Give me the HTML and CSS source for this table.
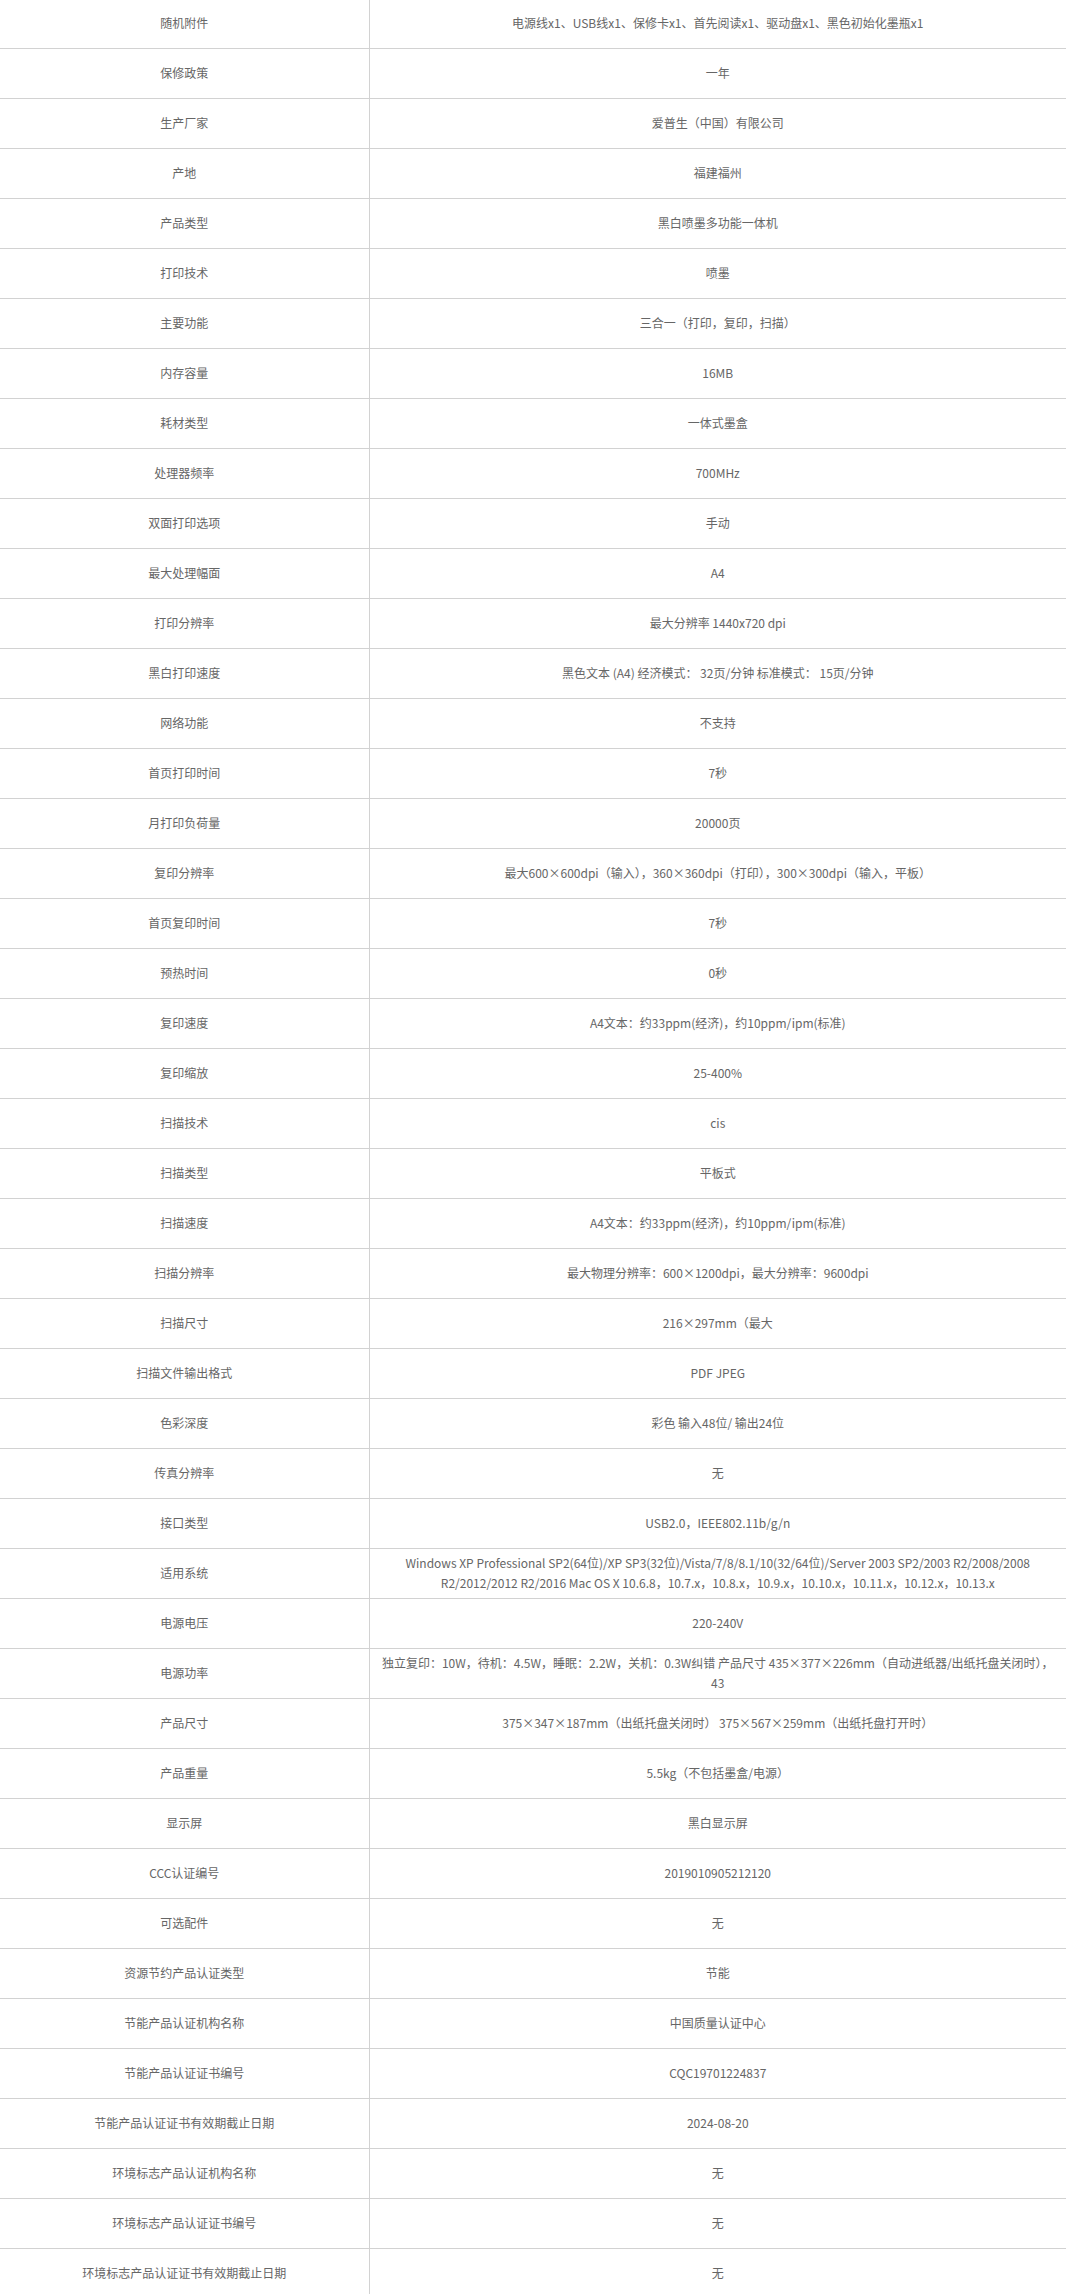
FILE: index.html
```html
<!DOCTYPE html>
<html lang="zh-CN">
<head>
<meta charset="utf-8">
<title>产品参数</title>
<link rel="stylesheet" href="styles.css">
</head>
<body>
<table class="spec">
<tbody>
<tr><td class="k">随机附件</td><td class="v">电源线x1、USB线x1、保修卡x1、首先阅读x1、驱动盘x1、黑色初始化墨瓶x1</td></tr>
<tr><td class="k">保修政策</td><td class="v">一年</td></tr>
<tr><td class="k">生产厂家</td><td class="v">爱普生（中国）有限公司</td></tr>
<tr><td class="k">产地</td><td class="v">福建福州</td></tr>
<tr><td class="k">产品类型</td><td class="v">黑白喷墨多功能一体机</td></tr>
<tr><td class="k">打印技术</td><td class="v">喷墨</td></tr>
<tr><td class="k">主要功能</td><td class="v">三合一（打印，复印，扫描）</td></tr>
<tr><td class="k">内存容量</td><td class="v">16MB</td></tr>
<tr><td class="k">耗材类型</td><td class="v">一体式墨盒</td></tr>
<tr><td class="k">处理器频率</td><td class="v">700MHz</td></tr>
<tr><td class="k">双面打印选项</td><td class="v">手动</td></tr>
<tr><td class="k">最大处理幅面</td><td class="v">A4</td></tr>
<tr><td class="k">打印分辨率</td><td class="v">最大分辨率 1440x720 dpi</td></tr>
<tr><td class="k">黑白打印速度</td><td class="v">黑色文本 (A4) 经济模式： 32页/分钟 标准模式： 15页/分钟</td></tr>
<tr><td class="k">网络功能</td><td class="v">不支持</td></tr>
<tr><td class="k">首页打印时间</td><td class="v">7秒</td></tr>
<tr><td class="k">月打印负荷量</td><td class="v">20000页</td></tr>
<tr><td class="k">复印分辨率</td><td class="v">最大600×600dpi（输入），360×360dpi（打印），300×300dpi（输入，平板）</td></tr>
<tr><td class="k">首页复印时间</td><td class="v">7秒</td></tr>
<tr><td class="k">预热时间</td><td class="v">0秒</td></tr>
<tr><td class="k">复印速度</td><td class="v">A4文本：约33ppm(经济)，约10ppm/ipm(标准)</td></tr>
<tr><td class="k">复印缩放</td><td class="v">25-400%</td></tr>
<tr><td class="k">扫描技术</td><td class="v">cis</td></tr>
<tr><td class="k">扫描类型</td><td class="v">平板式</td></tr>
<tr><td class="k">扫描速度</td><td class="v">A4文本：约33ppm(经济)，约10ppm/ipm(标准)</td></tr>
<tr><td class="k">扫描分辨率</td><td class="v">最大物理分辨率：600×1200dpi，最大分辨率：9600dpi</td></tr>
<tr><td class="k">扫描尺寸</td><td class="v">216×297mm（最大</td></tr>
<tr><td class="k">扫描文件输出格式</td><td class="v">PDF JPEG</td></tr>
<tr><td class="k">色彩深度</td><td class="v">彩色 输入48位/ 输出24位</td></tr>
<tr><td class="k">传真分辨率</td><td class="v">无</td></tr>
<tr><td class="k">接口类型</td><td class="v">USB2.0，IEEE802.11b/g/n</td></tr>
<tr><td class="k">适用系统</td><td class="v">Windows XP Professional SP2(64位)/XP SP3(32位)/Vista/7/8/8.1/10(32/64位)/Server 2003 SP2/2003 R2/2008/2008 R2/2012/2012 R2/2016 Mac OS X 10.6.8，10.7.x，10.8.x，10.9.x，10.10.x，10.11.x，10.12.x，10.13.x</td></tr>
<tr><td class="k">电源电压</td><td class="v">220-240V</td></tr>
<tr><td class="k">电源功率</td><td class="v">独立复印：10W，待机：4.5W，睡眠：2.2W，关机：0.3W纠错 产品尺寸 435×377×226mm（自动进纸器/出纸托盘关闭时），43</td></tr>
<tr><td class="k">产品尺寸</td><td class="v">375×347×187mm（出纸托盘关闭时） 375×567×259mm（出纸托盘打开时）</td></tr>
<tr><td class="k">产品重量</td><td class="v">5.5kg（不包括墨盒/电源）</td></tr>
<tr><td class="k">显示屏</td><td class="v">黑白显示屏</td></tr>
<tr><td class="k">CCC认证编号</td><td class="v">2019010905212120</td></tr>
<tr><td class="k">可选配件</td><td class="v">无</td></tr>
<tr><td class="k">资源节约产品认证类型</td><td class="v">节能</td></tr>
<tr><td class="k">节能产品认证机构名称</td><td class="v">中国质量认证中心</td></tr>
<tr><td class="k">节能产品认证证书编号</td><td class="v">CQC19701224837</td></tr>
<tr><td class="k">节能产品认证证书有效期截止日期</td><td class="v">2024-08-20</td></tr>
<tr><td class="k">环境标志产品认证机构名称</td><td class="v">无</td></tr>
<tr><td class="k">环境标志产品认证证书编号</td><td class="v">无</td></tr>
<tr><td class="k">环境标志产品认证证书有效期截止日期</td><td class="v">无</td></tr>
</tbody>
</table>
</body>
</html>
```

FILE: styles.css
```css
html, body {
  margin: 0;
  padding: 0;
  background: #fff;
}

body {
  font-family: "Microsoft YaHei", "Noto Sans CJK SC", "Noto Sans", sans-serif;
  font-size: 12px;
  color: #666;
}

.spec {
  width: 1066px;
  border-collapse: collapse;
  table-layout: fixed;
  margin-top: -2px;
}

.spec td {
  height: 50px;
  padding: 0 10px;
  text-align: center;
  vertical-align: middle;
  line-height: 20px;
  border-bottom: 1px solid #d2d2d2;
  box-sizing: border-box;
}

.spec td.k {
  width: 369px;
  border-right: 1px solid #d2d2d2;
}
```
